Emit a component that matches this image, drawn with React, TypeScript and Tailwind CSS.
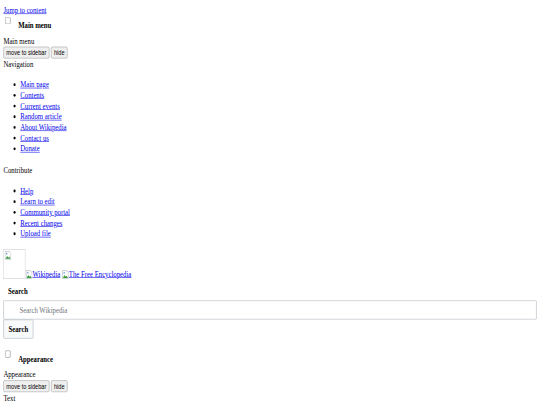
import React from "react";

const navLinks = [
  "Main page",
  "Contents",
  "Current events",
  "Random article",
  "About Wikipedia",
  "Contact us",
  "Donate",
];

const contributeLinks = [
  "Help",
  "Learn to edit",
  "Community portal",
  "Recent changes",
  "Upload file",
];

function BrokenIcon() {
  return (
    <svg width="16" height="16" viewBox="0 0 16 16" className="shrink-0">
      <path d="M1 1h10l4 4v10H1z" fill="#fff" stroke="#9aa0a6" strokeWidth="1" />
      <path d="M2 14l4-5 3 3 2-2 3 4z" fill="#3c9a3c" />
      <circle cx="5" cy="5" r="1.5" fill="#5b8fd9" />
    </svg>
  );
}

function NativeButton({ children }: { children: React.ReactNode }) {
  return (
    <button className="h-[21px] rounded-[3px] border border-[#9a9a9a] bg-[#efefef] px-[6px] font-['Liberation_Sans',Arial,sans-serif] text-[13.33px] leading-[15px] text-black">
      {children}
    </button>
  );
}

function Dropdown({ title }: { title: string }) {
  return (
    <>
      <div className="flex h-[36px] items-start">
        <input type="checkbox" className="ml-[4px] mt-[3px] h-[13px] w-[13px]" />
        <label className="ml-[18px] pt-[8px] font-bold leading-[19px]">{title}</label>
      </div>
      <div className="leading-[19px]">{title}</div>
      <div className="flex h-[22px] items-start gap-[4px] pt-[1px]">
        <NativeButton>move to sidebar</NativeButton>
        <NativeButton>hide</NativeButton>
      </div>
    </>
  );
}

function LinkList({ items }: { items: string[] }) {
  return (
    <ul className="my-[17px] list-disc pl-[40px] leading-[19px]">
      {items.map((t) => (
        <li key={t}>
          <a href="#" className="text-[#0000ee] underline">
            {t}
          </a>
        </li>
      ))}
    </ul>
  );
}

export default function App() {
  return (
    <div className="h-[405px] w-[540px] overflow-hidden bg-white">
      <div className="h-[720px] w-[1280px] origin-top-left bg-white p-[8px] font-['Liberation_Serif','Times_New_Roman',serif] text-[16px] text-black [transform:scale(0.421875,0.5625)]">
        <div className="leading-[19px]">
          <a href="#" className="text-[#0000ee] underline">
            Jump to content
          </a>
        </div>

        <Dropdown title="Main menu" />
        <div className="leading-[19px]">Navigation</div>
        <LinkList items={navLinks} />
        <div className="mt-[20px] leading-[19px]">Contribute</div>
        <LinkList items={contributeLinks} />

        <div className="mt-[19px] flex h-[57px] items-end">
          <div className="mb-[4px] flex h-[53px] w-[52px] items-start border border-[#c8c8c8] p-[2px]">
            <BrokenIcon />
          </div>
          <a href="#" className="mb-[4px] ml-[1px] flex items-end text-[#0000ee] underline leading-[19px]">
            <BrokenIcon />
            <span>Wikipedia</span>
          </a>
          <a href="#" className="mb-[4px] ml-[4px] flex items-end text-[#0000ee] underline leading-[19px]">
            <BrokenIcon />
            <span>The Free Encyclopedia</span>
          </a>
        </div>

        <form className="mb-[18px] mt-[7px]" onSubmit={(e) => e.preventDefault()}>
          <div className="pl-[11px] font-bold leading-[19px]">Search</div>
          <input
            type="search"
            placeholder="Search Wikipedia"
            className="mt-[8px] block h-[34px] w-full rounded-[2px] border border-[#a2a9b1] bg-white pl-[37px] text-[16px] placeholder:text-[#72777d]"
          />
          <button className="block h-[34px] w-[71px] rounded-[2px] border border-[#a2a9b1] bg-[#f8f9fa] font-bold">
            Search
          </button>
        </form>

        <Dropdown title="Appearance" />
        <div className="leading-[19px]">Text</div>
      </div>
    </div>
  );
}
